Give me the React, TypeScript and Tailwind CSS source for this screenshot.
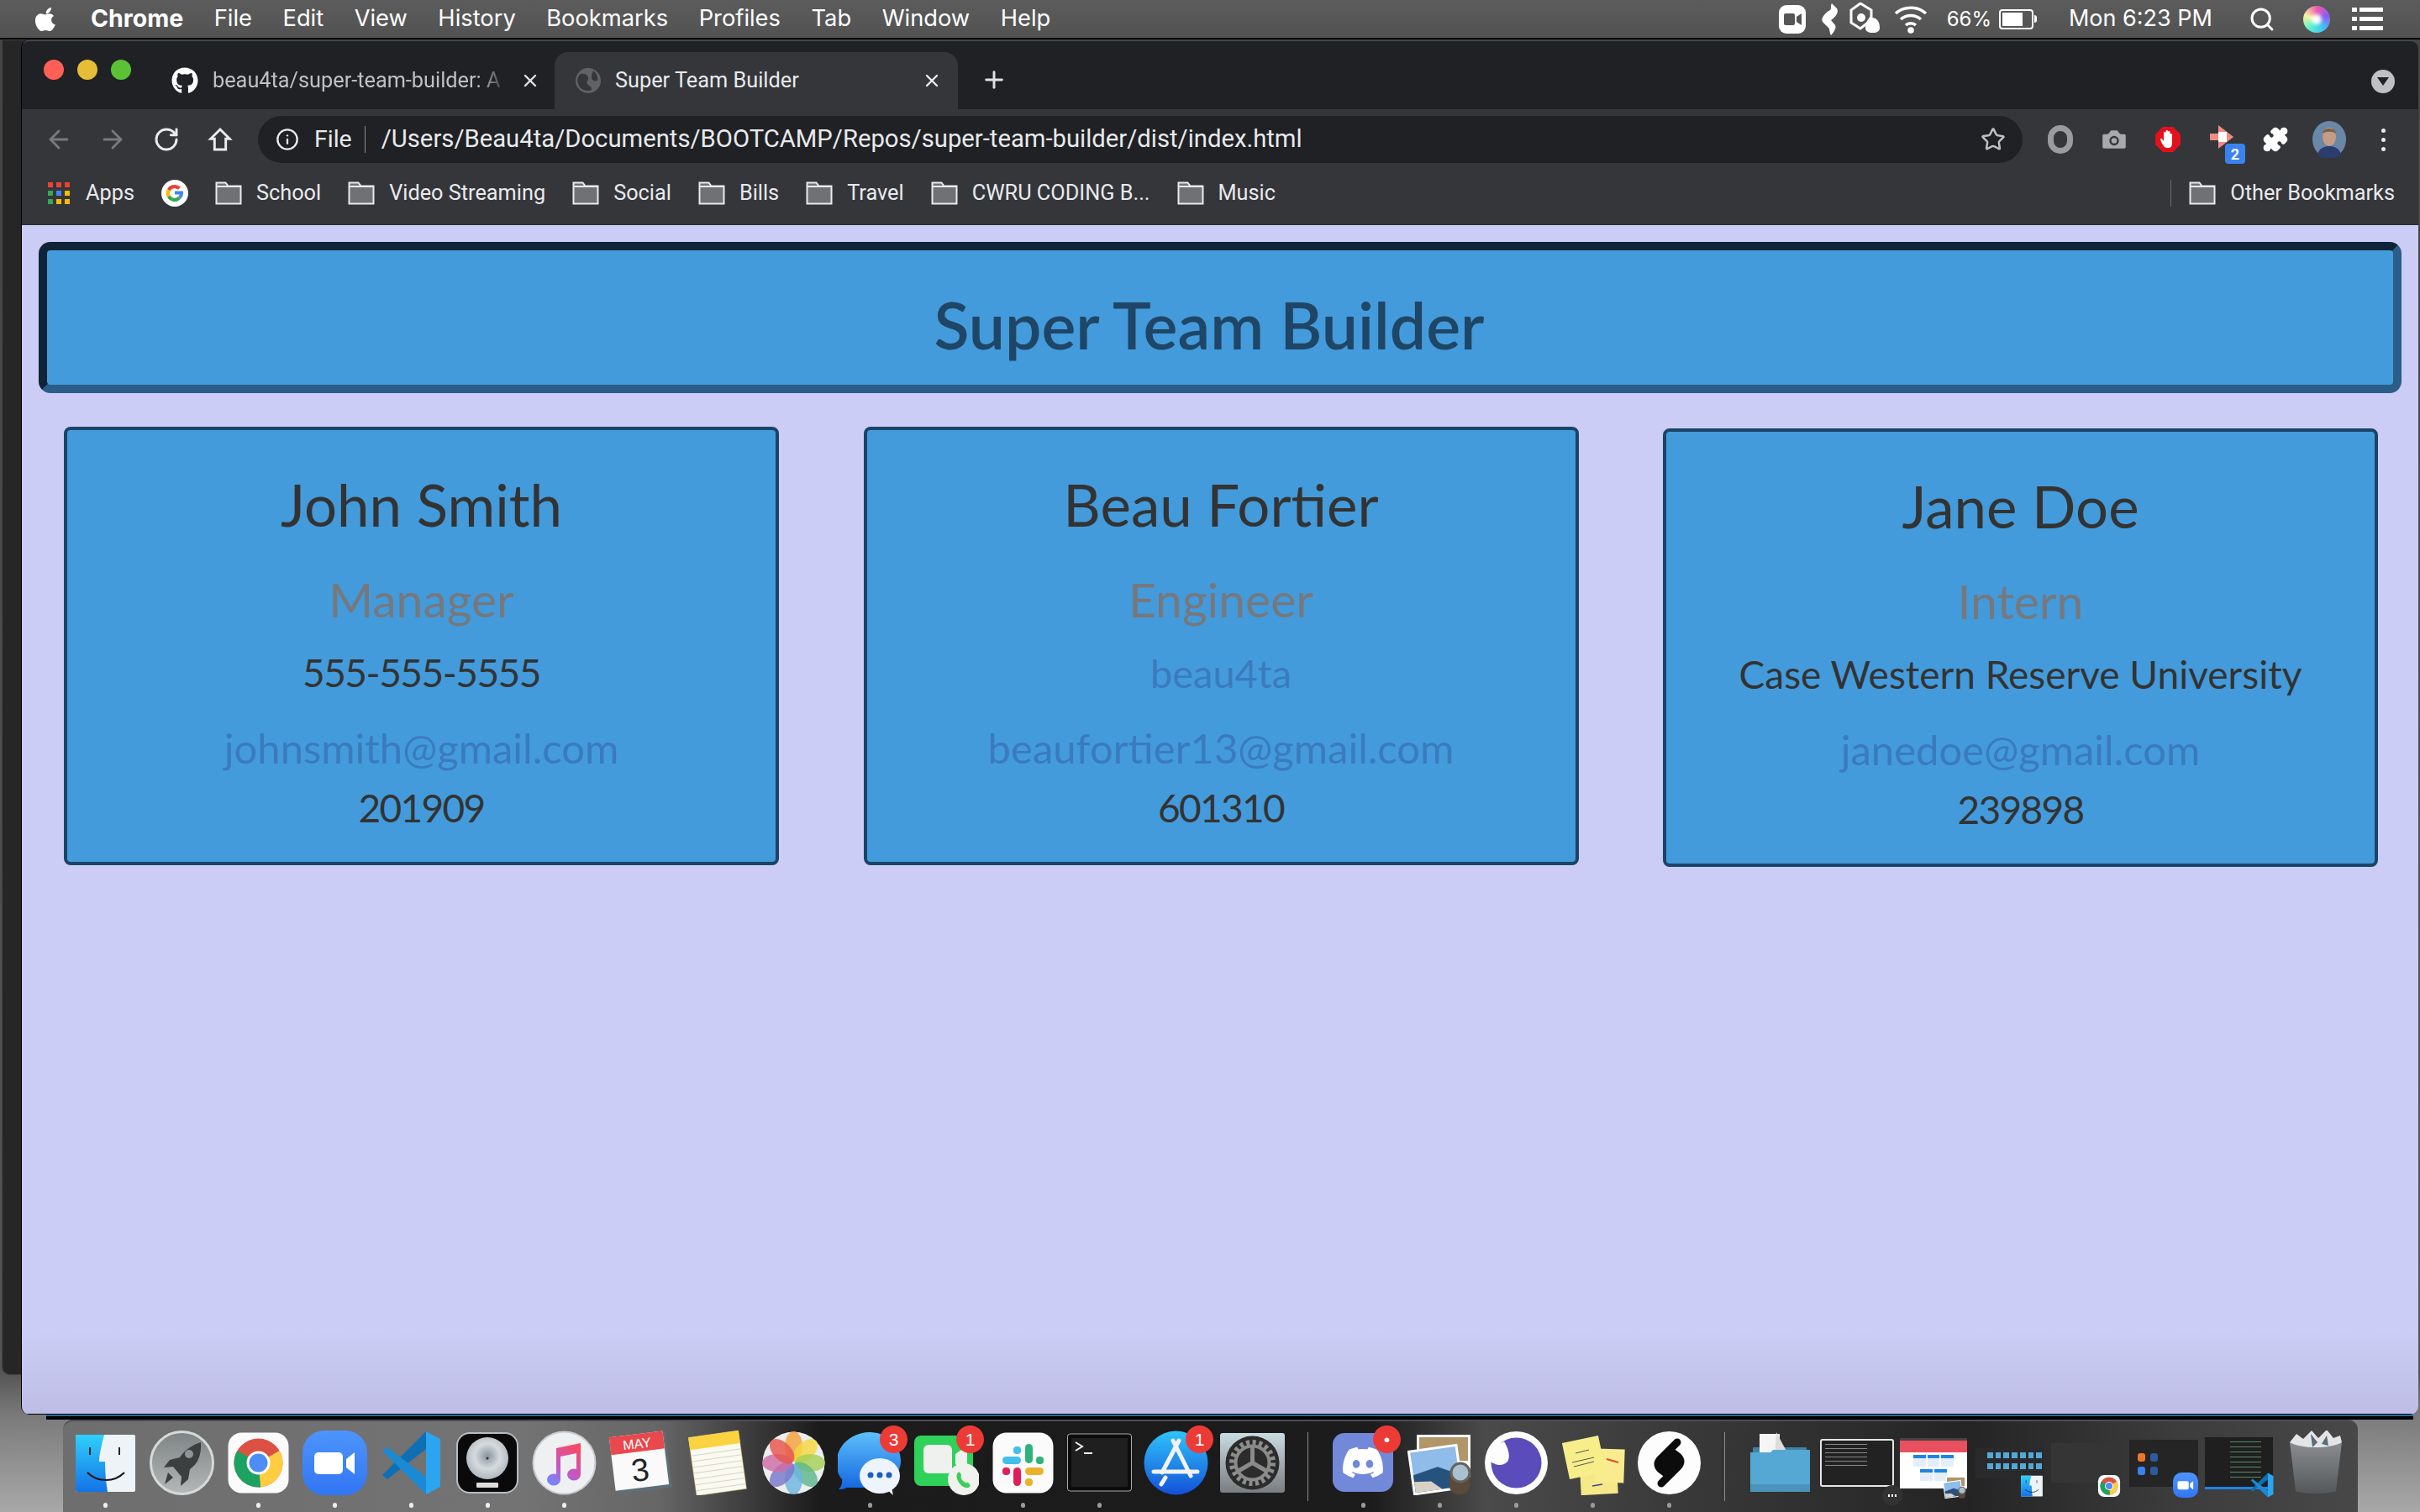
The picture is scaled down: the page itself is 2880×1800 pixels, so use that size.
import { Star, Plus, X, ArrowLeft, ArrowRight, RotateCw, Info, Search, Puzzle, Camera } from 'lucide-react';
import { FaGithub, FaDiscord } from 'react-icons/fa';
import type { ReactNode } from 'react';

const menuItems = ['File', 'Edit', 'View', 'History', 'Bookmarks', 'Profiles', 'Tab', 'Window', 'Help'];

function MenuBar() {
  return (
    <div className="h-[45px] shrink-0 flex items-center bg-[linear-gradient(#5c5c5c,#525252)] text-white font-['Inter',sans-serif] text-[27.300px] pl-[42px] border-b-2 border-black box-content">
      <svg viewBox="0 0 24 28" className="w-[26px] h-[32px] fill-white mr-[40px]">
        <path d="M17.5 1c.2 2.2-.7 3.8-1.7 5-1.100 1.200-2.600 2-4.100 1.900-.2-2 .8-3.800 1.800-4.900C14.700 1.800 16.400 1 17.500 1zM22 20c-.6 1.400-.9 2-1.700 3.200-1.100 1.700-2.600 3.700-4.500 3.800-1.700 0-2.100-1.100-4.400-1.100-2.300 0-2.800 1.100-4.500 1.100-1.900-.1-3.300-1.900-4.400-3.500C-.5 19 -.8 13.600 1 10.800c1.300-2 3.300-3.100 5.200-3.100 1.900 0 3.100 1.100 4.700 1.100 1.500 0 2.500-1.100 4.700-1.100 1.700 0 3.500.9 4.700 2.500-4.100 2.300-3.500 8.100 1.700 9.800z" />
      </svg>
      <span className="font-bold text-[28.500px]">Chrome</span>
      {menuItems.map((m) => (
        <span key={m} className="ml-[36.500px]">
          {m}
        </span>
      ))}
      <div className="ml-auto flex items-center">
        <svg viewBox="0 0 32 36" className="w-[32px] h-[36px]">
          <rect width="32" height="34" y="1" rx="9" fill="#fff" />
          <rect x="6" y="11" width="13" height="14" rx="2" fill="#555" />
          <path d="M21 15l6-4v14l-6-4z" fill="#555" />
        </svg>
        <svg viewBox="0 0 24 38" className="w-[24px] h-[38px] ml-[17px] fill-white">
          <path d="M14 0l6 6c3 4-2 11-7 14l5 6c2 3-2 9-5 12-2-3-1-7-3-9L3 22C0 17 8 10 12 8 14 6 12 3 14 0z" />
        </svg>
        <svg viewBox="0 0 40 40" className="w-[40px] h-[40px] ml-[10px]">
          <path d="M14 1l13 8v8l-4 7-9 7-11-7V9z" fill="none" stroke="#fff" strokeWidth="3" />
          <circle cx="15" cy="18" r="5" fill="#fff" />
          <path d="M28 18c6 0 9 6 9 12 0 4-3 6-8 6-6 0-9-2-9-6 0-6 3-12 8-12z" fill="#fff" />
        </svg>
        <svg viewBox="0 0 42 36" className="w-[42px] h-[36px] ml-[13px] fill-none stroke-white" strokeWidth="3.5">
          <path d="M3 11c10-9 26-9 36 0M9 18c7-6 17-6 24 0M15 25c3-3 9-3 12 0" />
          <circle cx="21" cy="31" r="2" fill="#fff" />
        </svg>
        <span className="ml-[22px] text-[24px]">66%</span>
        <div className="ml-[9px] w-[41px] h-[24px] border-2 border-white rounded-[4px] p-[2px] flex">
          <div className="w-[24px] bg-white" />
        </div>
        <div className="w-[3px] h-[9px] bg-white ml-[1px] rounded-r-sm" />
        <span className="ml-[38px] text-[27px]">Mon 6:23 PM</span>
        <Search className="ml-[43px] w-[32px] h-[32px]" strokeWidth={2.2} />
        <div className="ml-[33px] w-[32px] h-[32px] rounded-full bg-[conic-gradient(#f05bb0,#8a5cf0,#3ec5f5,#5cf0d0,#f5f5a0,#f05bb0)] flex items-center justify-center">
          <div className="w-[12px] h-[12px] rounded-full bg-white blur-[2px]" />
        </div>
        <div className="ml-[26px] mr-[44px] flex flex-col gap-[6px]">
          {[0, 1, 2].map((i) => (
            <div key={i} className="flex gap-[3px]">
              <div className="w-[6px] h-[5px] bg-white" />
              <div className="w-[28px] h-[5px] bg-white" />
            </div>
          ))}
        </div>
      </div>
    </div>
  );
}

function TabStrip() {
  return (
    <div className="h-[83px] shrink-0 bg-[#202124] flex relative font-['Roboto',sans-serif] text-[25.300px] text-[#e8eaed] border-t-2 border-[#45464a] rounded-t-[10px]">
      <div className="flex items-center gap-[16px] pl-[26px] h-[80px] w-[178px] shrink-0 -mt-[6px]">
        <div className="w-[24px] h-[24px] rounded-full bg-[#ff5f57]" />
        <div className="w-[24px] h-[24px] rounded-full bg-[#e5bd39]" />
        <div className="w-[24px] h-[24px] rounded-full bg-[#5bc236]" />
      </div>
      <div className="flex items-center w-[456px] shrink-0 pt-[13px]">
        <FaGithub className="w-[32px] h-[32px] text-white" />
        <span className="ml-[17px] w-[352px] whitespace-nowrap text-[#bdc1c6] [mask-image:linear-gradient(90deg,#000_90%,transparent)]">
          beau4ta/super-team-builder: A
        </span>
        <X className="ml-[14px] w-[24px] h-[24px] text-[#dfe1e5]" strokeWidth={2.4} />
      </div>
      <div className="mt-[13px] h-[68px] w-[480px] shrink-0 bg-[#35363a] rounded-t-[16px] flex items-center">
        <svg viewBox="0 0 32 32" className="ml-[24px] w-[32px] h-[32px]">
          <circle cx="16" cy="16" r="15" fill="#5f6368" />
          <path d="M7 8c5-1 8 1 9 4s-3 5-1 8 5 2 5 7c-4 2-12 1-15-5S3 11 7 8zM22 4c4 3 6 8 5 12-3 1-7 0-7-4s1-5 2-8z" fill="#35363a" />
        </svg>
        <span className="ml-[16px] whitespace-nowrap">Super Team Builder</span>
        <X className="ml-[146px] w-[24px] h-[24px] text-[#e8eaed]" strokeWidth={2.4} />
      </div>
      <Plus className="ml-[27px] mt-[30px] w-[32px] h-[32px] text-[#dfe1e5]" strokeWidth={2.2} />
      <div className="ml-auto mr-[28px] mt-[34px] w-[28px] h-[28px] rounded-full bg-[#bdc1c6] flex items-center justify-center">
        <div className="w-0 h-0 border-l-[7px] border-r-[7px] border-t-[10px] border-l-transparent border-r-transparent border-t-[#202124]" />
      </div>
    </div>
  );
}

function Toolbar() {
  return (
    <div className="h-[72px] shrink-0 bg-[#35363a] flex items-center pl-[12px] font-['Roboto',sans-serif]">
      <div className="w-[64px] flex justify-center"><ArrowLeft className="w-[34px] h-[34px] text-[#777a7f]" strokeWidth={2} /></div>
      <div className="w-[64px] flex justify-center"><ArrowRight className="w-[34px] h-[34px] text-[#777a7f]" strokeWidth={2} /></div>
      <div className="w-[64px] flex justify-center"><RotateCw className="w-[32px] h-[32px] text-[#e8eaed]" strokeWidth={2.2} /></div>
      <div className="w-[64px] flex justify-center">
        <svg viewBox="0 0 24 24" className="w-[32px] h-[32px] fill-none stroke-[#e8eaed]" strokeWidth="2.2">
          <path d="M12 3L3.500 11.500H7V21h10v-9.500h3.500z" strokeLinejoin="miter" />
        </svg>
      </div>
      <div className="ml-[13px] w-[2100px] h-[56px] rounded-full bg-[#202124] flex items-center text-[#e8eaed]">
        <Info className="ml-[21px] w-[28px] h-[28px]" strokeWidth={2} />
        <span className="ml-[18px] text-[28.500px]">File</span>
        <div className="ml-[15px] w-[1px] h-[32px] bg-[#8a8b8e]" />
        <span className="ml-[19px] text-[29.250px] whitespace-nowrap">/Users/Beau4ta/Documents/BOOTCAMP/Repos/super-team-builder/dist/index.html</span>
        <Star className="ml-auto mr-[20px] w-[30px] h-[30px] text-[#bdc1c6]" strokeWidth={2} />
      </div>
      <div className="ml-[13px] flex items-center">
        <div className="w-[64px] flex justify-center">
          <div className="w-[30px] h-[34px] rounded-full border-[7px] border-[#9a9b9d]" />
        </div>
        <div className="w-[64px] flex justify-center">
          <Camera className="w-[36px] h-[36px] text-[#35363a] fill-[#a8a9ab]" strokeWidth={1.6} />
        </div>
        <div className="w-[64px] flex justify-center">
          <svg viewBox="0 0 32 32" className="w-[32px] h-[34px]">
            <path d="M10 1h12l9 9v12l-9 9H10l-9-9V10z" fill="#e3111c" />
            <path d="M12 25c-2-2-4-6-5-9 0-1 1.500-1.500 2.500 0l1.500 2V8a1.300 1.300 0 0 1 2.500 0v6-8a1.300 1.300 0 0 1 2.500 0v8-7a1.300 1.300 0 0 1 2.500 0v8-5a1.300 1.300 0 0 1 2.500 0v11c0 3-2 5-4 5h-2c-1 0-2-.5-3-1z" fill="#fff" />
          </svg>
        </div>
        <div className="w-[64px] flex justify-center relative">
          <svg viewBox="0 0 32 32" className="w-[32px] h-[32px] -mt-[6px]">
            <path d="M2 12h10V2l18 14-18 14V20H2z" fill="#f28b82" />
            <rect x="12" y="10" width="10" height="12" fill="#fff" />
          </svg>
          <div className="absolute -bottom-[16px] left-[36px] w-[24px] h-[24px] rounded-[4px] bg-[#3b82f0] text-white text-[18px] font-bold flex items-center justify-center">
            2
          </div>
        </div>
        <div className="w-[64px] flex justify-center">
          <Puzzle className="w-[32px] h-[32px] text-white fill-white" strokeWidth={1.5} />
        </div>
        <div className="w-[64px] flex justify-center">
          <svg viewBox="0 0 44 44" className="w-[44px] h-[44px]">
            <ellipse cx="22" cy="22" rx="20" ry="22" fill="#6b87a8" />
            <ellipse cx="22" cy="19" rx="8" ry="11" fill="#c49c86" />
            <path d="M14 15c0-8 16-8 16 0-4-3-12-3-16 0z" fill="#7b6348" />
            <path d="M8 40c2-8 9-10 14-10s12 2 14 10a20 22 0 0 1-28 0z" fill="#2a3d6c" />
          </svg>
        </div>
        <div className="w-[64px] flex flex-col items-center gap-[6px]">
          <div className="w-[5px] h-[5px] rounded-full bg-[#e8eaed]" />
          <div className="w-[5px] h-[5px] rounded-full bg-[#e8eaed]" />
          <div className="w-[5px] h-[5px] rounded-full bg-[#e8eaed]" />
        </div>
      </div>
    </div>
  );
}

function FolderIcon() {
  return (
    <svg viewBox="0 0 32 28" className="w-[32px] h-[28px] shrink-0">
      <path d="M1.500 1.500h11l3 4h15v21h-29z" fill="#707174" stroke="#e8eaed" strokeWidth="2" />
      <path d="M1.500 6h29" stroke="#e8eaed" strokeWidth="2" />
    </svg>
  );
}

const bookmarks = ['School', 'Video Streaming', 'Social', 'Bills', 'Travel', 'CWRU CODING B...', 'Music'];

function BookmarksBar() {
  return (
    <div className="h-[66px] shrink-0 bg-[#35363a] flex items-center pb-[10px] font-['Roboto',sans-serif] text-[25.300px] text-[#e8eaed] border-b border-[#2a2b2e]">
      <div className="ml-[31px] grid grid-cols-3 gap-[4px] shrink-0">
        {['#ea4335', '#ea4335', '#ea4335', '#34a853', '#4285f4', '#fbbc04', '#34a853', '#fbbc04', '#fbbc04'].map((c, i) => (
          <div key={i} className="w-[6px] h-[6px]" style={{ backgroundColor: c }} />
        ))}
      </div>
      <span className="ml-[19px]">Apps</span>
      <svg viewBox="0 0 32 32" className="ml-[32px] w-[32px] h-[32px] shrink-0">
        <circle cx="16" cy="16" r="16" fill="#fff" />
        <path d="M16 6a10 10 0 0 1 7 2.800l-3 3A6 6 0 0 0 10.500 13.500L7 11A10 10 0 0 1 16 6z" fill="#ea4335" />
        <path d="M7 11l3.500 2.500a6 6 0 0 0 0 5L7 21a10 10 0 0 1 0-10z" fill="#fbbc04" />
        <path d="M7 21l3.500-2.500A6 6 0 0 0 20 20l3 2.800A10 10 0 0 1 7 21z" fill="#34a853" />
        <path d="M23 22.800L20 20a5 5 0 0 0 1.800-2.500H16v-4h10c.5 3.500-.5 7-3 9.300z" fill="#4285f4" />
      </svg>
      {bookmarks.map((b) => (
        <div key={b} className="flex items-center ml-[32px]">
          <FolderIcon />
          <span className="ml-[17px] whitespace-nowrap">{b}</span>
        </div>
      ))}
      <div className="ml-auto w-[1px] h-[32px] bg-[#6a6b6e]" />
      <div className="flex items-center ml-[21px] mr-[28px]">
        <FolderIcon />
        <span className="ml-[17px] whitespace-nowrap">Other Bookmarks</span>
      </div>
    </div>
  );
}

type Person = { name: string; role: string; mid: string; midCls: string; email: string; id: string; cls?: string };

const people: Person[] = [
  { name: 'John Smith', role: 'Manager', mid: '555-555-5555', midCls: 'text-[46px] tracking-[-1.500px]', email: 'johnsmith@gmail.com', id: '201909' },
  { name: 'Beau Fortier', role: 'Engineer', mid: 'beau4ta', midCls: 'text-[47px] text-[#3a7bbd]', email: 'beaufortier13@gmail.com', id: '601310' },
  { name: 'Jane Doe', role: 'Intern', mid: 'Case Western Reserve University', midCls: 'text-[46px]', email: 'janedoe@gmail.com', id: '239898', cls: 'mt-[2px]' },
];

function Card({ p }: { p: Person }) {
  return (
    <div className={`w-[851px] border-4 border-[#1a4468] rounded-[8px] bg-[#439bdb] flex flex-col items-center text-[#333333] pt-[44px] pb-[34px] ${p.cls ?? ''}`}>
      <div className="text-[69px] leading-[90px]">{p.name}</div>
      <div className="text-[57px] leading-[80px] mt-[27px] text-[#76787d]">{p.role}</div>
      <div className={`leading-[60px] mt-[18px] ${p.midCls}`}>{p.mid}</div>
      <div className="text-[49px] leading-[70px] mt-[24px] text-[#3a7bbd]">{p.email}</div>
      <div className="text-[46px] tracking-[-1.700px] leading-[60px] mt-[7px]">{p.id}</div>
    </div>
  );
}

function Page() {
  return (
    <div className="flex-1 bg-[linear-gradient(#cccdf6_0,#cccdf6_93%,#bdbde5_100%)] pt-[20px] font-['Lato',sans-serif] border-b border-black">
      <div className="ml-[20px] mr-[20px] h-[180px] border-[10px] border-t-[#0f2437] border-l-[#0f2437] border-b-[#2a5d88] border-r-[#2a5d88] rounded-[14px] bg-[#439bdb] flex items-center justify-center pr-[26px] pt-[18px]">
        <h1 className="text-[77px] font-semibold text-[#1f4666]">Super Team Builder</h1>
      </div>
      <div className="mt-[40px] pl-[50px] pr-[48px] flex justify-between items-start">
        {people.map((p) => (
          <Card key={p.name} p={p} />
        ))}
      </div>
    </div>
  );
}

/* dock icons, all on a 77 box */
function Finder() {
  return (
    <svg viewBox="0 0 77 77" className="w-full h-full">
      <defs>
        <linearGradient id="fb" x1="0" y1="0" x2="0" y2="1">
          <stop offset="0" stopColor="#2fd0fb" />
          <stop offset="1" stopColor="#1473e6" />
        </linearGradient>
      </defs>
      <rect x="3" y="5" width="71" height="68" rx="2" fill="#eef3f8" />
      <path d="M5 5h32c-3 12-6 24-6 32h7c0 12 1 24 3 36H5a2 2 0 0 1-2-2V7a2 2 0 0 1 2-2z" fill="url(#fb)" />
      <path d="M20 20v9M55 20v9" stroke="#222" strokeWidth="2" />
      <path d="M17 50c12 12 32 12 44 0" stroke="#111" strokeWidth="2" fill="none" />
    </svg>
  );
}
function Launchpad() {
  return (
    <svg viewBox="0 0 77 77" className="w-full h-full">
      <defs>
        <linearGradient id="lp" x1="0" y1="0" x2="0" y2="1">
          <stop offset="0" stopColor="#7e8384" />
          <stop offset="1" stopColor="#b4b8b8" />
        </linearGradient>
      </defs>
      <circle cx="38.500" cy="38.500" r="37" fill="url(#lp)" stroke="#d6d9d9" strokeWidth="3" />
      <path d="M61 14c-10 3-19 9-25 18l-12 3-7 9 11-1 10 12-1 11 9-8 2-12c9-6 14-16 13-32z" fill="#3b3f40" />
      <circle cx="47" cy="28" r="5" fill="#8f9596" />
      <path d="M22 50l6 6-10 8z" fill="#3b3f40" />
    </svg>
  );
}
function ChromeIcon({ small }: { small?: boolean }) {
  return (
    <svg viewBox="0 0 77 77" className="w-full h-full">
      <rect x="2.500" y="2.500" width="72" height="72" rx={small ? 20 : 16} fill="#fbfbfb" />
      <circle cx="38.500" cy="38.500" r="29" fill="#dd5044" />
      <path d="M38.500 38.500L63.600 24A29 29 0 0 1 41 67.400z" fill="#ffcd40" />
      <path d="M38.500 38.500L41 67.400A29 29 0 0 1 13.400 24z" fill="#1ca261" />
      <circle cx="38.500" cy="38.500" r="14" fill="#fff" />
      <circle cx="38.500" cy="38.500" r="11" fill="#4e8df5" />
    </svg>
  );
}
function ZoomIcon() {
  return (
    <svg viewBox="0 0 77 77" className="w-full h-full">
      <defs>
        <linearGradient id="zm" x1="0" y1="0" x2="0" y2="1">
          <stop offset="0" stopColor="#4e94fb" />
          <stop offset="1" stopColor="#3176f3" />
        </linearGradient>
      </defs>
      <rect width="77" height="77" rx="26" fill="url(#zm)" />
      <rect x="14" y="26" width="34" height="26" rx="5" fill="#fff" />
      <path d="M52 34l10-8v26l-10-8z" fill="#fff" />
    </svg>
  );
}
function VSCode() {
  return (
    <svg viewBox="0 0 77 77" className="w-full h-full">
      <path d="M4 53l52-52v21L10 58z" fill="#0e6fb4" />
      <path d="M4 24l6-4 46 35v21z" fill="#1a8ad4" />
      <path d="M56 1l17 9v57l-17 9z" fill="#2ba5ef" />
    </svg>
  );
}
function Logic() {
  return (
    <svg viewBox="0 0 77 77" className="w-full h-full">
      <defs>
        <radialGradient id="lg" cx="0.5" cy="0.45" r="0.6">
          <stop offset="0" stopColor="#8b949c" />
          <stop offset="0.5" stopColor="#d5dade" />
          <stop offset="1" stopColor="#a9b1b8" />
        </radialGradient>
      </defs>
      <rect x="2" y="3" width="72" height="71" rx="15" fill="#0a0a0a" stroke="#b5bdc4" strokeWidth="2" />
      <ellipse cx="38" cy="33" rx="25" ry="25" fill="url(#lg)" />
      <circle cx="38" cy="33" r="1.500" fill="#333" />
      <rect x="25" y="62" width="26" height="6" rx="1" fill="#ddd" />
    </svg>
  );
}
function Music() {
  return (
    <svg viewBox="0 0 77 77" className="w-full h-full">
      <defs>
        <linearGradient id="mu" x1="0.7" y1="0" x2="0.2" y2="1">
          <stop offset="0" stopColor="#fa4a62" />
          <stop offset="0.6" stopColor="#c258c8" />
          <stop offset="1" stopColor="#6f8bff" />
        </linearGradient>
      </defs>
      <circle cx="38.500" cy="38.500" r="37" fill="#eef0f2" stroke="#c9ccd0" strokeWidth="2" />
      <path d="M29 21l29-6v37a8 7 0 1 1-5-6V27l-19 4v27a8 7 0 1 1-5-6z" fill="url(#mu)" />
    </svg>
  );
}
function Calendar() {
  return (
    <svg viewBox="0 0 77 77" className="w-full h-full">
      <g transform="rotate(-7 38 40)">
        <rect x="6" y="6" width="66" height="66" fill="#5f6f78" />
        <rect x="5" y="4" width="64" height="64" fill="#fafafa" />
        <rect x="5" y="4" width="64" height="21" fill="#e9484d" />
        <text x="37" y="21" textAnchor="middle" fontFamily="Liberation Sans" fontSize="16" fill="#fff">MAY</text>
        <text x="37" y="60" textAnchor="middle" fontFamily="Liberation Sans" fontSize="38" fill="#222">3</text>
      </g>
    </svg>
  );
}
function Notes() {
  return (
    <svg viewBox="0 0 77 77" className="w-full h-full">
      <g transform="rotate(-8 38 40)">
        <rect x="9" y="4" width="60" height="70" fill="#fbfaf0" stroke="#c9b26a" strokeWidth="0.5" />
        <rect x="9" y="4" width="60" height="15" fill="#fbd23f" />
        {[26, 33, 40, 47, 54, 61, 68].map((y) => (
          <path key={y} d={`M9 ${y}h60`} stroke="#d6d4c8" strokeWidth="1" />
        ))}
      </g>
    </svg>
  );
}
function Photos() {
  const colors = ['#f6a13b', '#f4d93f', '#a4d155', '#5fb78b', '#6eb4de', '#7a78c9', '#cf6ba3', '#e8554b'];
  return (
    <svg viewBox="0 0 77 77" className="w-full h-full">
      <circle cx="38.500" cy="38.500" r="37" fill="#eceef0" />
      {colors.map((c, i) => (
        <ellipse key={c} cx="38.500" cy="19" rx="10.500" ry="18" fill={c} opacity="0.82" transform={`rotate(${i * 45} 38.500 38.500)`} />
      ))}
    </svg>
  );
}
function Messages() {
  return (
    <svg viewBox="0 0 77 77" className="w-full h-full">
      <defs>
        <linearGradient id="ms" x1="0" y1="0" x2="0" y2="1">
          <stop offset="0" stopColor="#5cc0fb" />
          <stop offset="1" stopColor="#1566e0" />
        </linearGradient>
      </defs>
      <path d="M38 2c20 0 37 15 37 34S58 62 50 68L10 68c-2 2-5 2-9 2 3-3 5-7 4-12C-2 50-1 42-1 36-1 17 18 2 38 2z" fill="url(#ms)" />
      <ellipse cx="50" cy="54" rx="24" ry="21" fill="#eef4fb" />
      <path d="M58 70l8 7-2-9z" fill="#eef4fb" />
      <circle cx="39" cy="53" r="3.500" fill="#1a5fc0" />
      <circle cx="50" cy="53" r="3.500" fill="#1a5fc0" />
      <circle cx="61" cy="53" r="3.500" fill="#1a5fc0" />
    </svg>
  );
}
function FaceTime() {
  return (
    <svg viewBox="0 0 77 77" className="w-full h-full">
      <rect x="0" y="6" width="70" height="60" rx="8" fill="#2fd158" />
      <rect x="11" y="17" width="34" height="34" rx="6" fill="#eef1ee" />
      <path d="M49 28l14-10v32l-14-10z" fill="#eef1ee" />
      <circle cx="59" cy="58" r="19" fill="#f0f2ee" />
      <path d="M52 50c2-2 4 2 4 3s-1 2 0 4 3 4 5 5 2-1 3 0 4 3 2 5c-4 3-9 0-12-4s-5-10-2-13z" fill="#3dcf5c" />
    </svg>
  );
}
function Slack() {
  return (
    <svg viewBox="0 0 77 77" className="w-full h-full">
      <rect x="2.500" y="2.500" width="72" height="72" rx="16" fill="#fbfbfb" />
      <rect x="14" y="31" width="22" height="9" rx="4.500" fill="#40c0ea" />
      <rect x="27" y="19" width="9" height="9" rx="4" fill="#40c0ea" />
      <rect x="41" y="16" width="9" height="23" rx="4.500" fill="#2fb37c" />
      <rect x="54" y="31" width="9" height="9" rx="4" fill="#2fb37c" />
      <rect x="41" y="44" width="22" height="9" rx="4.500" fill="#ecb22e" />
      <rect x="41" y="57" width="9" height="9" rx="4" fill="#ecb22e" />
      <rect x="27" y="44" width="9" height="22" rx="4.500" fill="#e01e5a" />
      <rect x="14" y="44" width="9" height="9" rx="4" fill="#e01e5a" />
    </svg>
  );
}
function Terminal() {
  return (
    <svg viewBox="0 0 77 77" className="w-full h-full">
      <rect x="0.500" y="4" width="76" height="68" rx="3" fill="#0c0c0c" stroke="#a8aaac" strokeWidth="1" />
      <rect x="5" y="9" width="67" height="58" fill="#1f1f1f" />
      <path d="M10 14l8 5-8 5" stroke="#f2f2f2" strokeWidth="2" fill="none" />
      <path d="M20 27h10" stroke="#f2f2f2" strokeWidth="2" />
    </svg>
  );
}
function AppStore() {
  return (
    <svg viewBox="0 0 77 77" className="w-full h-full">
      <defs>
        <linearGradient id="as" x1="0" y1="0" x2="0" y2="1">
          <stop offset="0" stopColor="#2fc4fb" />
          <stop offset="1" stopColor="#1450d8" />
        </linearGradient>
      </defs>
      <ellipse cx="38.500" cy="38.500" rx="38" ry="38" fill="url(#as)" />
      <path d="M42 12L22 50M35 12l21 42M12 49h52M26 56l-5 8" stroke="#f1f3f6" strokeWidth="5" strokeLinecap="round" fill="none" />
    </svg>
  );
}
function SysPrefs() {
  return (
    <svg viewBox="0 0 77 77" className="w-full h-full">
      <defs>
        <linearGradient id="sp" x1="0" y1="0" x2="0" y2="1">
          <stop offset="0" stopColor="#c8dce2" />
          <stop offset="1" stopColor="#7a7d80" />
        </linearGradient>
      </defs>
      <rect x="0" y="3" width="77" height="71" rx="3" fill="url(#sp)" />
      <circle cx="38.500" cy="38.500" r="32" fill="#2c2c2c" />
      <circle cx="38.500" cy="38.500" r="24" fill="none" stroke="#8e8e8e" strokeWidth="7" strokeDasharray="4 3.500" />
      <circle cx="38.500" cy="38.500" r="20" fill="none" stroke="#8a8a8a" strokeWidth="4" />
      <path d="M38.500 38.500V20M38.500 38.500L22 48M38.500 38.500L55 48" stroke="#8a8a8a" strokeWidth="5" />
    </svg>
  );
}
function Discord() {
  return (
    <div className="w-[72px] h-[70px] mt-[3px] ml-[2px] rounded-[14px] bg-[#7289da] flex items-center justify-center">
      <FaDiscord className="w-[52px] h-[52px] text-white" />
    </div>
  );
}
function Preview() {
  return (
    <svg viewBox="0 0 77 77" className="w-full h-full">
      <rect x="11" y="5" width="64" height="50" fill="#fff" />
      <rect x="14" y="8" width="58" height="28" fill="#b09668" />
      <g transform="rotate(-8 30 45)">
        <rect x="3" y="20" width="60" height="54" fill="#fff" />
        <rect x="6" y="23" width="54" height="48" fill="#8fbce8" />
        <path d="M6 50l30-6 24 12v15H6z" fill="#26527e" />
        <path d="M6 58l20 2 12 11H6z" fill="#d8d2c4" />
      </g>
      <rect x="50" y="44" width="24" height="32" rx="10" fill="#5a4a3c" />
      <circle cx="63" cy="50" r="11" fill="#a8c0d0" stroke="#6a6056" strokeWidth="3" />
    </svg>
  );
}
function Eclipse() {
  return (
    <svg viewBox="0 0 77 77" className="w-full h-full">
      <circle cx="38.500" cy="38.500" r="37.500" fill="#fdfdfd" />
      <circle cx="38.500" cy="38.500" r="30" fill="#5a4dbb" />
      <path d="M6 36c7 5 15 7 21 2 5-5 3-15-3-25C12 17 5 26 6 36z" fill="#fdfdfd" />
    </svg>
  );
}
function Stickies() {
  return (
    <svg viewBox="0 0 77 77" className="w-full h-full">
      <rect x="24" y="50" width="44" height="26" fill="#f4e889" transform="rotate(-3 46 62)" />
      <rect x="42" y="22" width="34" height="40" fill="#f8ec8e" transform="rotate(2 60 42)" />
      <rect x="6" y="10" width="44" height="44" fill="#f7ee8a" transform="rotate(-12 28 32)" />
      <path d="M18 27l16-4M14 38l26-6M16 43l24-6" stroke="#555" strokeWidth="1" />
      <path d="M55 34l14 4" stroke="#e04a3a" strokeWidth="2" />
      <path d="M38 66l12-2" stroke="#3a4a8a" strokeWidth="1.500" />
    </svg>
  );
}
function Splice() {
  return (
    <svg viewBox="0 0 77 77" className="w-full h-full">
      <circle cx="38.500" cy="38.500" r="37.500" fill="#fdfdfd" />
      <path d="M48 14L28 34c-4 4-4 8 0 12l4 3 15-15M29 63l20-20c4-4 4-8 0-12l-4-3-15 15" fill="none" stroke="#0c0c0c" strokeWidth="9" strokeLinecap="round" />
    </svg>
  );
}
function Folder() {
  return (
    <svg viewBox="0 0 77 77" className="w-full h-full">
      <path d="M6 20h64v14H6z" fill="#3f82a8" />
      <rect x="14" y="4" width="24" height="28" fill="#f5f5f5" />
      <path d="M34 2l16 30H32z" fill="#dcdcdc" />
      <path d="M3 26h24l3-3h44v50H3z" fill="#55a8d3" />
      <path d="M3 64h71v9H3z" fill="#4a94bb" />
    </svg>
  );
}
function Trash() {
  return (
    <svg viewBox="0 0 77 77" className="w-full h-full">
      <defs>
        <linearGradient id="tr" x1="0" y1="0" x2="0" y2="1">
          <stop offset="0" stopColor="#8a8d8f" />
          <stop offset="1" stopColor="#55585a" />
        </linearGradient>
      </defs>
      <path d="M8 14h62l-7 58c-8 4-40 4-48 0z" fill="url(#tr)" />
      <path d="M8 14l8-10 8 6 10-10 8 9 10-10 8 10 8-3 2 8c-14 8-48 8-62 0z" fill="#e2e4e6" />
      <path d="M33 4l8 10-6 6zM52 6l-6 10 8 2z" fill="#5a6a7a" />
    </svg>
  );
}

function Badge({ n }: { n: string }) {
  return (
    <div className="absolute -top-[6px] left-[50px] w-[33px] h-[33px] rounded-full bg-[#ec3b37] text-white font-['Liberation_Sans',sans-serif] text-[21px] flex items-center justify-center">
      {n}
    </div>
  );
}

type DockApp = { key: string; icon: ReactNode; on?: boolean; badge?: string };

function DockItem({ icon, on, badge, dim }: DockApp & { dim?: boolean }) {
  return (
    <div className="w-[91px] shrink-0 flex flex-col items-center">
      <div className="relative w-[77px] h-[77px]">
        {icon}
        {badge && <Badge n={badge} />}
      </div>
      <div className={`mt-[9px] w-[5px] h-[6px] rounded-full ${on ? (dim ? 'bg-[#9a9a9a]' : 'bg-[#eeeeee]') : 'bg-transparent'}`} />
    </div>
  );
}

const appsA: DockApp[] = [
  { key: 'finder', icon: <Finder />, on: true },
  { key: 'launch', icon: <Launchpad /> },
  { key: 'chrome', icon: <ChromeIcon />, on: true },
  { key: 'zoom', icon: <ZoomIcon />, on: true },
  { key: 'vscode', icon: <VSCode />, on: true },
  { key: 'logic', icon: <Logic />, on: true },
  { key: 'music', icon: <Music />, on: true },
  { key: 'cal', icon: <Calendar /> },
  { key: 'notes', icon: <Notes /> },
  { key: 'photos', icon: <Photos /> },
  { key: 'msg', icon: <Messages />, on: true, badge: '3' },
  { key: 'ft', icon: <FaceTime />, badge: '1' },
  { key: 'slack', icon: <Slack />, on: true },
  { key: 'term', icon: <Terminal />, on: true },
  { key: 'store', icon: <AppStore />, badge: '1' },
  { key: 'prefs', icon: <SysPrefs /> },
];
const appsB: DockApp[] = [
  { key: 'discord', icon: <Discord />, on: true, badge: '•' },
  { key: 'preview', icon: <Preview />, on: true },
  { key: 'eclipse', icon: <Eclipse />, on: true },
  { key: 'stickies', icon: <Stickies />, on: true },
  { key: 'splice', icon: <Splice />, on: true },
];

function Thumb({ win, badge, badgeCls, children }: { win: string; badge: ReactNode; badgeCls: string; children?: ReactNode }) {
  return (
    <div className="relative w-[91px] shrink-0 h-[90px]">
      <div className={`absolute overflow-hidden ${win}`}>{children}</div>
      <div className={`absolute ${badgeCls}`}>{badge}</div>
    </div>
  );
}

function Dock() {
  return (
    <div className="flex-1 bg-[linear-gradient(#7a7a7a,#a8a8a8)]">
      <div className="h-[6px] ml-[55px] mr-[8px] bg-black border-t-2 border-[#2b6a9f]" />
      <div className="ml-[75px] w-[2731px] h-[110px] rounded-t-[12px] border-t-2 border-[#4d4d4d] bg-[linear-gradient(90deg,#6e6e6e_0,#737373_20%,#666_26%,#1b1b1b_33%,#1c1c1c_57%,#4a4a4a_62%,#3a3a3a_70%,#242424_83%,#3c3c3c_92%,#484848_100%)] flex pt-[11px] pl-[5px]">
        {appsA.map((a) => (
          <DockItem key={a.key} {...a} dim={a.key === 'msg' || a.key === 'slack' || a.key === 'term'} />
        ))}
        <div className="w-[41px] shrink-0 flex justify-center pt-[2px]"><div className="w-[1px] h-[82px] bg-[#8a8a8a]" /></div>
        {appsB.map((a) => (
          <DockItem key={a.key} {...a} dim />
        ))}
        <div className="w-[41px] shrink-0 flex justify-center pt-[2px]"><div className="w-[1px] h-[82px] bg-[#8a8a8a]" /></div>
        <DockItem key="folder" icon={<Folder />} />
        <Thumb
          win="left-[2px] top-[10px] w-[88px] h-[57px] bg-[#222] border-2 border-[#e5e5e5] rounded-[3px] p-[4px]"
          badgeCls="left-[76px] top-[65px] w-[24px] h-[24px] rounded-full bg-[#333] flex items-center justify-center gap-[2px]"
          badge={[0, 1, 2].map((i) => <div key={i} className="w-[2px] h-[3px] bg-white" />)}
        >
          {[0, 1, 2, 3, 4, 5].map((i) => (
            <div key={i} className="h-[1px] w-[50px] bg-[#888] mb-[4px]" />
          ))}
        </Thumb>
        <Thumb
          win="left-[6px] top-[9px] w-[80px] h-[60px] bg-white"
          badgeCls="left-[56px] top-[53px] w-[30px] h-[28px]"
          badge={<Preview />}
        >
          <div className="h-[3px] bg-[#444]" />
          <div className="h-[14px] bg-[#e9505f]" />
          <div className="mt-[3px] mx-[16px] grid grid-cols-3 gap-[2px]">
            {[0, 1, 2].map((i) => (
              <div key={i} className="h-[14px] bg-[#e3eefa] border-t-[4px] border-[#1e84e6]" />
            ))}
          </div>
          <div className="mt-[3px] mx-[24px] grid grid-cols-2 gap-[2px]">
            {[0, 1].map((i) => (
              <div key={i} className="h-[14px] bg-[#e3eefa] border-t-[4px] border-[#1e84e6]" />
            ))}
          </div>
        </Thumb>
        <Thumb
          win="left-[5px] top-[21px] w-[82px] h-[36px] bg-[#2a2a2c] pt-[5px] pl-[14px] pr-[3px]"
          badgeCls="left-[58px] top-[52px] w-[28px] h-[28px]"
          badge={<Finder />}
        >
          <div className="grid grid-cols-7 gap-x-[3px] gap-y-[6px]">
            {Array.from({ length: 14 }).map((_, i) => (
              <div key={i} className="h-[7px] bg-[#53a8d6]" />
            ))}
          </div>
        </Thumb>
        <Thumb
          win="left-[4px] top-[15px] w-[83px] h-[47px] bg-[#353535]"
          badgeCls="left-[59px] top-[52px] w-[28px] h-[28px]"
          badge={<ChromeIcon small />}
        />
        <Thumb
          win="left-[6px] top-[11px] w-[82px] h-[56px] bg-[#252525] pl-[10px] pt-[16px]"
          badgeCls="left-[58px] top-[50px] w-[30px] h-[30px]"
          badge={<ZoomIcon />}
        >
          <div className="grid grid-cols-2 gap-[6px] w-[24px]">
            <div className="h-[10px] bg-[#f0752a] rounded-[3px]" />
            <div className="h-[10px] bg-[#2e5a9e] rounded-[3px]" />
            <div className="h-[10px] bg-[#3b82f0] rounded-[3px]" />
            <div className="h-[10px] bg-[#2e5a9e] rounded-[3px]" />
          </div>
        </Thumb>
        <Thumb
          win="left-[5px] top-[8px] w-[81px] h-[62px] bg-[#1f1f1f] border-b-[3px] border-[#1e84e6] pt-[5px]"
          badgeCls="left-[58px] top-[50px] w-[30px] h-[30px]"
          badge={<VSCode />}
        >
          {[0, 1, 2, 3, 4, 5, 6, 7].map((i) => (
            <div key={i} className="h-[1px] bg-[#5a8a6a] ml-[30px] mr-[14px] mb-[5px]" />
          ))}
        </Thumb>
        <DockItem key="trash" icon={<Trash />} />
      </div>
    </div>
  );
}

export default function App() {
  return (
    <div className="w-[2880px] h-[1800px] bg-black flex flex-col overflow-hidden font-['Roboto',sans-serif]">
      <MenuBar />
      <div className="relative h-[1637px] shrink-0 bg-[linear-gradient(#444_0,#555_97%,#7a7a7a_100%)] pl-[25px] pr-[2px] flex">
        {/* window behind, only its left edge shows */}
        <div className="absolute left-[2px] top-0 w-[60px] h-[1590px] bg-[#262626] border border-[#444] rounded-b-[10px]" />
        <div className="relative flex-1 flex flex-col rounded-[10px] overflow-hidden border-l border-black">
          <TabStrip />
          <Toolbar />
          <BookmarksBar />
          <Page />
        </div>
      </div>
      <Dock />
    </div>
  );
}
